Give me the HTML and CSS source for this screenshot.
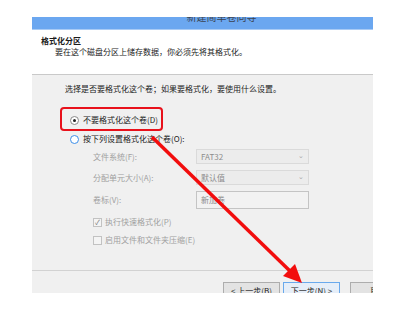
FILE: index.html
```html
<!DOCTYPE html>
<html lang="zh-CN">
<head>
  <meta charset="UTF-8">
  <title>新建简单卷向导</title>
  <link rel="stylesheet" href="styles.css">
</head>
<body>
  <div class="window">
    <div class="titlebar"><span>新建简单卷向导</span></div>

    <div class="header">
      <div class="h-title">格式化分区</div>
      <div class="h-desc">要在这个磁盘分区上储存数据，你必须先将其格式化。</div>
    </div>

    <div class="content">
      <p class="prompt">选择是否要格式化这个卷；如果要格式化，要使用什么设置。</p>

      <div class="radio checked"><span class="dot"></span>不要格式化这个卷(D)</div>
      <div class="radio hover"><span class="dot"></span>按下列设置格式化这个卷(O):</div>

      <div class="form">
        <span class="lbl">文件系统(F):</span>
        <div class="select">FAT32<span class="caret">&#8964;</span></div>
        <span class="lbl">分配单元大小(A):</span>
        <div class="select">默认值<span class="caret">&#8964;</span></div>
        <span class="lbl">卷标(V):</span>
        <div class="textbox">新加卷</div>
      </div>

      <div class="check on"><span class="box">&#10003;</span>执行快速格式化(P)</div>
      <div class="check"><span class="box"></span>启用文件和文件夹压缩(E)</div>
    </div>

    <div class="footer">
      <div class="btn">&lt; 上一步(B)</div>
      <div class="btn primary">下一步(N) &gt;</div>
      <div class="btn cancel">取消</div>
    </div>

    <div class="callout"></div>
  </div>

  <svg class="arrow" width="395" height="314" viewBox="0 0 395 314">
    <line x1="152" y1="137" x2="291" y2="272" stroke="#f20d0d" stroke-width="3.5"/>
    <polygon points="302,283 295,264 283,276" fill="#f20d0d"/>
  </svg>
</body>
</html>
```

FILE: styles.css
```css
body {
  margin: 0;
  background: #fff;
  font-family: "Noto Sans CJK SC", "Liberation Sans", sans-serif;
  color: #1b1b1b;
}

.window {
  position: relative;
  width: 341px;
  margin: 17px 0 0 32px;
  overflow: hidden;
}

.titlebar {
  height: 12px;
  background: #6ba7f0;
  border-bottom: 1px solid #a9cbf5;
  overflow: hidden;
  text-align: center;
}

.titlebar span {
  display: block;
  margin-top: -8px;
  padding-left: 38px;
  font-size: 10px;
  line-height: 16px;
  color: #3a4350;
}

.header {
  height: 45px;
  background: #fff;
  border-bottom: 1px solid #c9c9c9;
  padding-left: 9px;
  box-sizing: border-box;
  padding-top: 5px;
  font-size: 8px;
  line-height: 11px;
}

.h-title {
  font-weight: bold;
}

.h-desc {
  padding-left: 14px;
}

.content {
  background: #f0f0f0;
  height: 196px;
  box-sizing: border-box;
  padding: 8px 0 0 33px;
  border-bottom: 1px solid #d2d2d2;
  font-size: 8px;
  line-height: 12px;
}

.prompt {
  margin: 0 0 19px;
}

.radio {
  display: flex;
  align-items: center;
  gap: 4px;
  margin-left: 5px;
  height: 12px;
  margin-bottom: 7px;
}

.radio .dot {
  width: 7px;
  height: 7px;
  border: 1px solid #8a8a8a;
  border-radius: 50%;
  background: #fff;
  position: relative;
}

.radio.checked .dot::after {
  content: "";
  position: absolute;
  left: 2px;
  top: 2px;
  width: 3px;
  height: 3px;
  border-radius: 50%;
  background: #222;
}

.radio.hover .dot {
  border-color: #3d8ee8;
}

.form {
  display: grid;
  grid-template-columns: 103px 113px;
  grid-template-rows: 15px 15px 18px;
  row-gap: 6px;
  align-items: center;
  margin: -3px 0 7px 28px;
  color: #a0a0a0;
}

.select,
.textbox {
  height: 100%;
  box-sizing: border-box;
  border: 1px solid #dadada;
  background: #ececec;
  color: #8c8c8c;
  padding-left: 4px;
  display: flex;
  align-items: center;
  justify-content: space-between;
}

.textbox {
  border-color: #c4c4c4;
  background: #f2f2f2;
}

.caret {
  font-size: 7px;
  padding-right: 4px;
  line-height: 7px;
  margin-top: -3px;
  color: #a8a8a8;
}

.check {
  display: flex;
  align-items: center;
  gap: 3px;
  margin: 0 0 6px 28px;
  height: 12px;
  color: #a0a0a0;
}

.check .box {
  width: 7px;
  height: 7px;
  border: 1px solid #c2c2c2;
  background: #f4f4f4;
  font-size: 7px;
  line-height: 7px;
  text-align: center;
  color: #777;
}

.footer {
  background: #f0f0f0;
  height: 22px;
  box-sizing: border-box;
  padding: 11px 0 0 191px;
  display: flex;
  gap: 3px;
  overflow: hidden;
}

.btn {
  flex-shrink: 0;
  width: 57px;
  height: 20px;
  box-sizing: border-box;
  border: 1px solid #adadad;
  background: #e3e3e3;
  font-size: 8px;
  line-height: 10px;
  padding-top: 3px;
  text-align: center;
  color: #222;
}

.btn.primary {
  border-color: #69a9ec;
  background: #e6eef8;
}

.btn.cancel {
  margin-left: 7px;
}

.callout {
  position: absolute;
  left: 28px;
  top: 90px;
  width: 103px;
  height: 24px;
  box-sizing: border-box;
  border: 2.5px solid #e8111b;
  border-radius: 4px;
}

.arrow {
  position: absolute;
  left: 0;
  top: 0;
  pointer-events: none;
}
```
